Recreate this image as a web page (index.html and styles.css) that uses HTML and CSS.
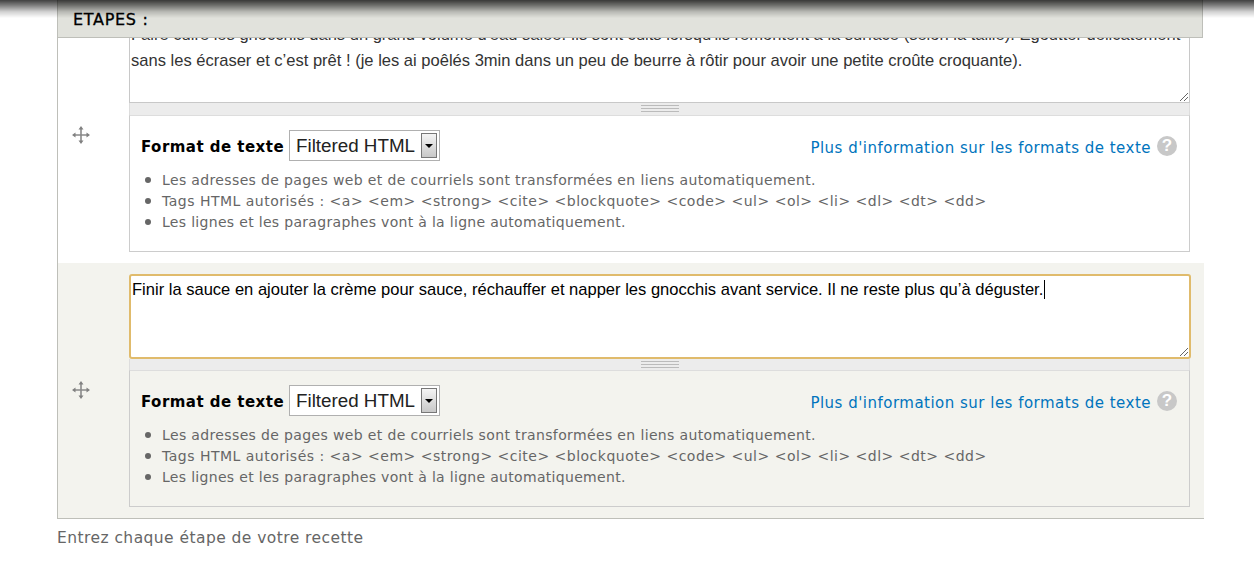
FILE: index.html
```html
<!DOCTYPE html>
<html lang="fr">
<head>
<meta charset="utf-8">
<title>Etapes</title>
<link rel="stylesheet" href="styles.css">
</head>
<body>
<div class="top-shadow"></div>
<main class="page">
  <header class="sticky-head">ETAPES :</header>
  <section class="steps">
    <div class="row">
      <div class="handle">
        <svg class="drag" width="18" height="18" viewBox="0 0 18 18"><path d="M9 2v14M2 9h14" stroke="#8a8a8a" stroke-width="1.6" fill="none"/><path d="M9 0l2.5 3.5h-5zM9 18l2.5-3.500h-5zM0 9l3.500-2.500v5zM18 9l-3.500-2.500v5z" fill="#808080"/></svg>
      </div>
      <div class="cell">
        <div class="area area-old">Faire cuire les gnocchis dans un grand volume d'eau salée. Ils sont cuits lorsqu'ils remontent à la surface (selon la taille). Egoutter délicatement sans les écraser et c’est prêt ! (je les ai poêlés 3min dans un peu de beurre à rôtir pour avoir une petite croûte croquante).<svg class="resize" width="10" height="10" viewBox="0 0 10 10"><path d="M1 9l8-8M5 9l4-4" stroke="#666" fill="none"/></svg></div>
        <div class="grip"><span></span></div>
        <div class="filter">
          <div class="filter-top">
            <div class="filter-pick"><label class="filter-label">Format de texte</label>
              <div class="select"><span>Filtered HTML</span><i class="arrow"></i></div></div>
            <div class="filter-link"><a href="#">Plus d'information sur les formats de texte</a><b class="help">?</b></div>
          </div>
          <ul class="tips">
            <li>Les adresses de pages web et de courriels sont transformées en liens automatiquement.</li>
            <li class="tip-tags">Tags HTML autorisés : &lt;a&gt; &lt;em&gt; &lt;strong&gt; &lt;cite&gt; &lt;blockquote&gt; &lt;code&gt; &lt;ul&gt; &lt;ol&gt; &lt;li&gt; &lt;dl&gt; &lt;dt&gt; &lt;dd&gt;</li>
            <li class="tip-lines">Les lignes et les paragraphes vont à la ligne automatiquement.</li>
          </ul>
        </div>
      </div>
    </div>
    <div class="row row-active">
      <div class="handle">
        <svg class="drag" width="18" height="18" viewBox="0 0 18 18"><path d="M9 2v14M2 9h14" stroke="#8a8a8a" stroke-width="1.6" fill="none"/><path d="M9 0l2.5 3.5h-5zM9 18l2.5-3.500h-5zM0 9l3.500-2.500v5zM18 9l-3.500-2.500v5z" fill="#808080"/></svg>
      </div>
      <div class="cell">
        <div class="area area-focus">Finir la sauce en ajouter la crème pour sauce, réchauffer et napper les gnocchis avant service. Il ne reste plus qu’à déguster.<i class="caret"></i><svg class="resize" width="10" height="10" viewBox="0 0 10 10"><path d="M1 9l8-8M5 9l4-4" stroke="#666" fill="none"/></svg></div>
        <div class="grip"><span></span></div>
        <div class="filter">
          <div class="filter-top">
            <div class="filter-pick"><label class="filter-label">Format de texte</label>
              <div class="select"><span>Filtered HTML</span><i class="arrow"></i></div></div>
            <div class="filter-link"><a href="#">Plus d'information sur les formats de texte</a><b class="help">?</b></div>
          </div>
          <ul class="tips">
            <li>Les adresses de pages web et de courriels sont transformées en liens automatiquement.</li>
            <li class="tip-tags">Tags HTML autorisés : &lt;a&gt; &lt;em&gt; &lt;strong&gt; &lt;cite&gt; &lt;blockquote&gt; &lt;code&gt; &lt;ul&gt; &lt;ol&gt; &lt;li&gt; &lt;dl&gt; &lt;dt&gt; &lt;dd&gt;</li>
            <li class="tip-lines">Les lignes et les paragraphes vont à la ligne automatiquement.</li>
          </ul>
        </div>
      </div>
    </div>
  </section>
  <p class="desc">Entrez chaque étape de votre recette</p>
</main>
</body>
</html>
```
FILE: styles.css
```css
* { box-sizing: border-box; }
html, body { margin: 0; padding: 0; height: 100%; overflow: hidden; background: #fff; }
body { font-family: "DejaVu Sans", sans-serif; color: #555; }
.top-shadow { position: fixed; left: 0; top: 0; right: 0; height: 18px; z-index: 5; background: linear-gradient(to bottom, rgba(0,0,0,.75), rgba(0,0,0,.5) 30%, rgba(0,0,0,.18) 65%, rgba(0,0,0,0)); pointer-events: none; }
.page { margin-left: 57px; width: 1147px; }
.sticky-head { position: relative; z-index: 2; width: 1146px; height: 38px; padding: 9px 15px 0; background: #e1e2dc; border: 1px solid #bebfb9; border-top: 0; font-size: 16px; line-height: 21px; letter-spacing: .7px; color: #000; -webkit-text-stroke: .3px #000; }
.steps { margin-top: -38px; border-left: 1px solid #bebfb9; border-bottom: 1px solid #bebfb9; }
.row { display: flex; background: #fff; height: 263px; padding: 0 14px 11px 0; }
.row-active { background: #f3f3ee; height: 255px; padding: 11px 14px 11px 0; }
.handle { width: 71px; flex: none; padding-left: 14px; }
.drag { display: block; margin-top: 126px; }
.row-active .drag { margin-top: 107px; }
.cell { flex: 1; min-width: 0; }
.area { position: relative; height: 103px; padding: 22px 1px 0; font-family: "Liberation Sans", sans-serif; font-size: 16.55px; line-height: 26px; background: #fff; border-left: 1px solid #c8c8c8; border-right: 1px solid #c8c8c8; border-bottom: 1px solid #c8c8c8; color: #333; }
.area-focus { height: 85px; margin-right: -1px; padding: 3px 1px 0; line-height: 22px; color: #000; border: 2px solid #e0bb6c; border-radius: 3px; white-space: nowrap; }
.caret { display: inline-block; width: 1px; height: 19px; background: #000; vertical-align: -4px; margin-left: 1px; }
.resize { position: absolute; right: 0; bottom: 0; }
.grip { height: 12px; padding-bottom: 2px; background: #ececec; border-left: 1px solid #ddd; border-right: 1px solid #ddd; display: flex; align-items: center; justify-content: center; }
.row-active .grip { height: 11px; padding-bottom: 0; }
.grip span { width: 38px; height: 7px; border-top: 1px solid #bbb; border-bottom: 1px solid #bbb; background: linear-gradient(#bbb, #bbb) center / 100% 1px no-repeat; }
.filter { height: 137px; border: 1px solid #ccc; border-top-color: #ddd; padding: 14px 11px 0; }
.filter-top { display: flex; justify-content: space-between; align-items: center; height: 31px; }
.filter-pick { display: flex; align-items: center; gap: 5px; }
.filter-label { font-weight: 700; font-size: 15px; letter-spacing: .47px; color: #000; padding-top: 3px; }
.select { width: 151px; height: 31px; display: flex; align-items: center; justify-content: space-between; padding: 0 2px 0 6px; background: #fff; border: 1px solid #b0b0b0; font-family: "Liberation Sans", sans-serif; font-size: 18.8px; color: #222; }
.arrow { width: 16px; height: 25px; border: 1px solid #777; background: linear-gradient(#f4f4f4, #c8c8c8); position: relative; }
.arrow::after { content: ""; position: absolute; left: 3px; top: 10px; border: 4px solid transparent; border-top: 4px solid #000; border-bottom: 0; }
.filter-link { display: flex; align-items: center; gap: 6px; margin-right: 1px; }
.filter-link a { color: #0074bd; text-decoration: none; font-size: 15px; letter-spacing: .49px; padding-top: 5px; }
.help { width: 20px; height: 20px; border-radius: 50%; background: #c8c8c8; color: #fff; font: 700 17px/20px "Liberation Sans", sans-serif; text-align: center; }
.tips { margin: 9px 0 0; padding: 0 0 0 21px; font-size: 14px; letter-spacing: .36px; line-height: 21px; color: #666; list-style: none; }
.tips li::before { content: ""; display: inline-block; width: 6px; height: 6px; border-radius: 50%; background: #666; margin: 0 11px 1px -17px; vertical-align: 1px; }
.tips .tip-tags { letter-spacing: .49px; }
.tips .tip-lines { letter-spacing: .31px; }
.desc { margin: 9px 0 0; font-size: 15.5px; letter-spacing: .44px; line-height: 20px; color: #666; }
```
